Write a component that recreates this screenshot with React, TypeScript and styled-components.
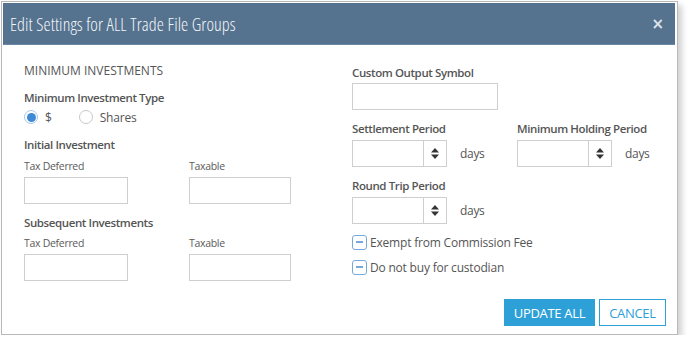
import React from "react";
import styled, { createGlobalStyle } from "styled-components";

const Global = createGlobalStyle`
  html, body { margin: 0; padding: 0; background: #fff; }
  body { font-family: "Open Sans", "Noto Sans", sans-serif; color: #555; }
  * { box-sizing: border-box; }
`;

const Page = styled.div`
  padding: 1px 0 0 1px;
`;

const Dialog = styled.div`
  width: 677px;
  height: 334px;
  border: 1px solid #b8b8b8;
  background: #fff;
  padding: 1px 2px 0 1px;
  box-shadow: 4px 4px 6px rgba(0, 0, 0, 0.18);
  display: flex;
  flex-direction: column;
`;

const Header = styled.div`
  height: 42px;
  background: #55728f;
  border-bottom: 1px solid #6a87a6;
  display: flex;
  align-items: center;
  justify-content: space-between;
  padding: 0 11px 0 7px;
`;

const Title = styled.h1`
  margin: 0;
  font-family: "Open Sans", sans-serif;
  font-weight: 300;
  font-size: 18px;
  font-stretch: 75%;
  color: #f2f5f8;
  letter-spacing: 0.1px;
`;

const Close = styled.span`
  font-family: "DejaVu Sans", sans-serif;
  font-weight: bold;
  font-size: 15px;
  color: #dde3ea;
`;

const Body = styled.div`
  padding: 18px 10px 0 21px;
  display: grid;
  grid-template-columns: 328px 1fr;
`;

const Column = styled.div`
  display: flex;
  flex-direction: column;
  align-items: flex-start;
`;

const SectionTitle = styled.div`
  font-size: 12px;
  line-height: 16px;
  color: #555;
`;

const Label = styled.div<{ $mt: number }>`
  font-size: 11.5px;
  font-weight: 600;
  letter-spacing: -0.4px;
  line-height: 16px;
  color: #555;
  margin-top: ${(p) => p.$mt}px;
  white-space: nowrap;
`;

const SmallLabel = styled.div<{ $mt: number }>`
  font-size: 10.5px;
  letter-spacing: -0.3px;
  line-height: 16px;
  color: #5a5a5a;
  margin-top: ${(p) => p.$mt}px;
`;

const Pair = styled.div<{ $mt: number }>`
  display: grid;
  grid-template-columns: 165px 165px;
  margin-top: ${(p) => p.$mt}px;
`;

const Field = styled.div`
  display: flex;
  flex-direction: column;
  align-items: flex-start;
`;

const TextBox = styled.input<{ $w: number; $mt: number }>`
  width: ${(p) => p.$w}px;
  height: 27px;
  border: 1px solid #cfcfcf;
  border-radius: 0;
  margin-top: ${(p) => p.$mt}px;
  padding: 0 6px;
  outline: none;
  font: inherit;
`;

const RadioRow = styled.div`
  display: flex;
  align-items: center;
  margin-top: 3px;
  height: 16px;
  font-size: 12px;
  letter-spacing: -0.2px;
  color: #555;
`;

const RadioOption = styled.label`
  display: flex;
  align-items: center;
  gap: 7px;
  margin-right: 27px;
`;

const RadioCircle = styled.span<{ $on?: boolean }>`
  width: 14px;
  height: 14px;
  border-radius: 50%;
  border: 1px solid ${(p) => (p.$on ? "#a9c8ea" : "#c8c8c8")};
  background: #fff;
  display: flex;
  align-items: center;
  justify-content: center;
  &::after {
    content: "";
    width: 9px;
    height: 9px;
    border-radius: 50%;
    background: ${(p) => (p.$on ? "#3f8ad6" : "transparent")};
  }
`;

const SpinnerRow = styled.div<{ $mt: number }>`
  display: flex;
  align-items: center;
  margin-top: ${(p) => p.$mt}px;
`;

const Spinner = styled.div`
  width: 95px;
  height: 27px;
  border: 1px solid #cfcfcf;
  display: flex;
`;

const SpinInput = styled.div`
  width: 71px;
  border-right: 1px solid #cfcfcf;
`;

const SpinArrows = styled.div`
  flex: 1;
  display: flex;
  align-items: center;
  justify-content: center;
`;

const Days = styled.span`
  font-size: 12px;
  letter-spacing: -0.3px;
  margin-left: 13px;
  color: #555;
`;

const CheckRow = styled.label<{ $mt: number }>`
  display: flex;
  align-items: center;
  gap: 3px;
  height: 16px;
  margin-top: ${(p) => p.$mt}px;
  font-size: 12px;
  letter-spacing: -0.2px;
  color: #555;
`;

const CheckBox = styled.span`
  width: 15px;
  height: 15px;
  border: 1.5px solid #76a9db;
  border-radius: 3px;
  display: flex;
  align-items: center;
  justify-content: center;
  &::after {
    content: "";
    width: 7px;
    height: 1.5px;
    background: #76a9db;
  }
`;

const Footer = styled.div`
  display: flex;
  justify-content: flex-end;
  gap: 4px;
  margin-top: 18px;
  padding-right: 9px;
`;

const Button = styled.button<{ $primary?: boolean; $w: number }>`
  width: ${(p) => p.$w}px;
  height: 27px;
  padding: 0;
  border: 1px solid #2ea0d8;
  background: ${(p) => (p.$primary ? "#2ea0d8" : "#fff")};
  color: ${(p) => (p.$primary ? "#fff" : "#2ea0d8")};
  font-family: "Open Sans", sans-serif;
  font-size: 13px;
  letter-spacing: -0.3px;
  font-weight: 400;
  border-radius: 0;
`;

function Arrows() {
  return (
    <svg width="8" height="11" viewBox="0 0 8 11">
      <path d="M4 0 L8 4.5 L0 4.5 Z" fill="#333" />
      <path d="M4 11 L8 6.5 L0 6.5 Z" fill="#333" />
    </svg>
  );
}

function NumberSpin() {
  return (
    <Spinner>
      <SpinInput />
      <SpinArrows>
        <Arrows />
      </SpinArrows>
    </Spinner>
  );
}

export default function App() {
  return (
    <>
      <Global />
      <Page>
        <Dialog>
          <Header>
            <Title>Edit Settings for ALL Trade File Groups</Title>
            <Close>×</Close>
          </Header>
          <Body>
            <Column>
              <SectionTitle>MINIMUM INVESTMENTS</SectionTitle>
              <Label $mt={11}>Minimum Investment Type</Label>
              <RadioRow>
                <RadioOption>
                  <RadioCircle $on />$
                </RadioOption>
                <RadioOption>
                  <RadioCircle />
                  Shares
                </RadioOption>
              </RadioRow>
              <Label $mt={12}>Initial Investment</Label>
              <Pair $mt={5}>
                <Field>
                  <SmallLabel $mt={0}>Tax Deferred</SmallLabel>
                  <TextBox $w={104} $mt={3} />
                </Field>
                <Field>
                  <SmallLabel $mt={0}>Taxable</SmallLabel>
                  <TextBox $w={102} $mt={3} />
                </Field>
              </Pair>
              <Label $mt={11}>Subsequent Investments</Label>
              <Pair $mt={4}>
                <Field>
                  <SmallLabel $mt={0}>Tax Deferred</SmallLabel>
                  <TextBox $w={104} $mt={3} />
                </Field>
                <Field>
                  <SmallLabel $mt={0}>Taxable</SmallLabel>
                  <TextBox $w={102} $mt={3} />
                </Field>
              </Pair>
            </Column>
            <Column>
              <Label $mt={2}>Custom Output Symbol</Label>
              <TextBox $w={146} $mt={2} />
              <Pair $mt={11}>
                <Field>
                  <Label $mt={0}>Settlement Period</Label>
                  <SpinnerRow $mt={3}>
                    <NumberSpin />
                    <Days>days</Days>
                  </SpinnerRow>
                </Field>
                <Field>
                  <Label $mt={0}>Minimum Holding Period</Label>
                  <SpinnerRow $mt={3}>
                    <NumberSpin />
                    <Days>days</Days>
                  </SpinnerRow>
                </Field>
              </Pair>
              <Label $mt={11}>Round Trip Period</Label>
              <SpinnerRow $mt={3}>
                <NumberSpin />
                <Days>days</Days>
              </SpinnerRow>
              <CheckRow $mt={10}>
                <CheckBox />
                Exempt from Commission Fee
              </CheckRow>
              <CheckRow $mt={9}>
                <CheckBox />
                Do not buy for custodian
              </CheckRow>
            </Column>
          </Body>
          <Footer>
            <Button $primary $w={91}>
              UPDATE ALL
            </Button>
            <Button $w={67}>CANCEL</Button>
          </Footer>
        </Dialog>
      </Page>
    </>
  );
}
